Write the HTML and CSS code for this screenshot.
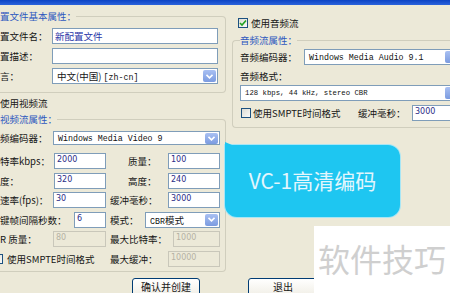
FILE: index.html
```html
<!DOCTYPE html>
<html lang="zh-CN">
<head>
    <meta charset="UTF-8">
    <title>新配置文件</title>
    <link rel="stylesheet" href="styles.css">
</head>
<body>
    <div class="titlebar"></div>

    <div class="dialog">
        <!-- left column: profile + video -->
        <div class="col-left">
            <fieldset class="group group-basic">
                <legend>置文件基本属性：</legend>
                <div class="row">
                    <span class="lab w52">置文件名：</span>
                    <span class="box w166"><span class="name-text">新配置文件</span></span>
                </div>
                <div class="row">
                    <span class="lab w52">置描述：</span>
                    <span class="box w166"></span>
                </div>
                <div class="row">
                    <span class="lab w52">言：</span>
                    <span class="box combo w166"><span class="val">中文(中国) <span class="mono">[zh-cn]</span></span><span class="drop"><svg width="7" height="5" viewBox="0 0 7 5"><path d="M0.5 0.8 L3.5 3.8 L6.5 0.8" fill="none" stroke="#fff" stroke-width="1.6"/></svg></span></span>
                </div>
            </fieldset>

            <div class="check-line video-check"><span>使用视频流</span></div>

            <fieldset class="group group-video">
                <legend>视频流属性：</legend>
                <div class="row codec-row">
                    <span class="lab w53">频编码器：</span>
                    <span class="box combo w167"><span class="val mono">Windows Media Video 9</span><span class="drop"><svg width="7" height="5" viewBox="0 0 7 5"><path d="M0.5 0.8 L3.5 3.8 L6.5 0.8" fill="none" stroke="#fff" stroke-width="1.6"/></svg></span></span>
                </div>
                <div class="row">
                    <span class="lab w54">特率kbps：</span>
                    <span class="box num w52">2000</span>
                    <span class="lab lab2-far w40">质量：</span>
                    <span class="box num w52">100</span>
                </div>
                <div class="row">
                    <span class="lab w54">度：</span>
                    <span class="box num w52">320</span>
                    <span class="lab lab2-far w40">高度：</span>
                    <span class="box num w52">240</span>
                </div>
                <div class="row">
                    <span class="lab w53">速率(fps)：</span>
                    <span class="box num w53">30</span>
                    <span class="lab lab2 w58">缓冲毫秒：</span>
                    <span class="box num w52">3000</span>
                </div>
                <div class="row">
                    <span class="lab w74">键帧间隔秒数：</span>
                    <span class="box num w32">6</span>
                    <span class="lab lab2 w35">模式：</span>
                    <span class="box combo w75"><span class="val"><span class="mono">CBR</span>模式</span><span class="drop"><svg width="7" height="5" viewBox="0 0 7 5"><path d="M0.5 0.8 L3.5 3.8 L6.5 0.8" fill="none" stroke="#fff" stroke-width="1.6"/></svg></span></span>
                </div>
                <div class="row">
                    <span class="lab w53">R 质量：</span>
                    <span class="box num off w53">80</span>
                    <span class="lab lab2 w63">最大比特率：</span>
                    <span class="box num off w47">1000</span>
                </div>
                <div class="row">
                    <span class="lab w106 smpte-left"><span class="cb"></span>使用SMPTE时间格式</span>
                    <span class="lab lab2 w58">最大缓冲：</span>
                    <span class="box num off w52">10000</span>
                </div>
            </fieldset>
        </div>

        <!-- right column: audio -->
        <div class="col-right">
            <div class="check-line audio-check">
                <span class="cb"><svg width="8" height="8" viewBox="0 0 8 8"><path d="M1 4 L3 6 L7 1.5" fill="none" stroke="#21a121" stroke-width="1.6"/></svg></span>
                <span>使用音频流</span>
            </div>

            <fieldset class="group group-audio">
                <legend>音频流属性：</legend>
                <div class="row">
                    <span class="lab w64">音频编码器：</span>
                    <span class="box combo w156"><span class="val mono">Windows Media Audio 9.1</span><span class="drop"></span></span>
                </div>
                <div class="row row-text">
                    <span class="lab">音频格式：</span>
                </div>
                <div class="row row-format">
                    <span class="box combo w220"><span class="val mono small">128 kbps, 44 kHz, stereo CBR</span><span class="drop"></span></span>
                </div>
                <div class="row row-smpte">
                    <span class="cb"></span>
                    <span class="lab w105">使用SMPTE时间格式</span>
                    <span class="lab w54">缓冲毫秒：</span>
                    <span class="box num w48">3000</span>
                </div>
            </fieldset>
        </div>
    </div>

    <div class="actions">
        <span class="btn w68">确认并创建</span>
        <span class="btn w70">退出</span>
    </div>

    <!-- annotation overlays -->
    <div class="callout">VC-1高清编码</div>
    <div class="watermark">软件技巧</div>
</body>
</html>
```

FILE: styles.css
```css
* {
    box-sizing: border-box;
}

body {
    margin: 0;
    width: 450px;
    height: 293px;
    overflow: hidden;
    position: relative;
    background-color: #ece9d8;
    font-family: "Noto Sans CJK SC", sans-serif;
    font-size: 9.5px;
    color: #151515;
}

.titlebar {
    height: 5px;
    background: linear-gradient(#0c43c4, #2b63dc);
}

.dialog {
    display: flex;
    width: 470px;
}

.col-left {
    width: 226px;
    flex: none;
}

.col-right {
    width: 244px;
    flex: none;
}

/* group boxes */
.group {
    margin: 0;
    min-width: 0;
    border: 1px solid #d0cebd;
}

.group legend {
    padding: 0;
    height: 11px;
    line-height: 11px;
    color: #2e58bf;
}

.group-basic {
    margin-top: 6px;
    border-left: none;
    border-radius: 0 4px 4px 0;
    padding: 6px 0 8px 0;
}

.group-video {
    margin-top: 5px;
    border-left: none;
    border-radius: 0 4px 4px 0;
    padding: 6px 0 4px 0;
}

.group-audio {
    margin: 7px 0 0 6px;
    border-right: none;
    border-radius: 4px 0 0 4px;
    padding: 3px 0 6px 7px;
}

/* rows */
.row {
    display: flex;
    align-items: center;
    height: 16px;
}

.group-basic .row + .row {
    margin-top: 4px;
}

.group-video .row + .row {
    margin-top: 3.5px;
}

.group-video .codec-row {
    height: 14px;
}

.group-video .codec-row + .row {
    margin-top: 8px;
}

.row-text {
    height: 12px;
    margin-top: 5px;
}

.row-format {
    margin-top: 3px;
}

.row-smpte {
    margin-top: 4px;
}

.row-smpte .cb {
    margin: 0 2px 0 1px;
}

.lab {
    flex: none;
    white-space: nowrap;
    line-height: 12px;
}

.lab2 {
    margin-left: 4px;
}

.lab2-far {
    margin-left: 22px;
}

.check-line {
    display: flex;
    align-items: center;
    height: 11px;
    line-height: 11px;
    white-space: nowrap;
}

.video-check {
    margin-top: 5px;
}

.audio-check {
    margin: 13px 0 0 12px;
    height: 10px;
}

.audio-check .cb {
    margin-right: 3px;
}

/* edit boxes */
.box {
    flex: none;
    display: flex;
    align-items: center;
    height: 16px;
    padding-left: 2px;
    border: 1px solid #7f9db9;
    background-color: #fff;
    white-space: nowrap;
    overflow: hidden;
}

.codec-row .box {
    height: 14px;
}

.num {
    font-family: "DejaVu Sans", sans-serif;
    font-size: 8px;
    color: #2c2c86;
    align-items: flex-start;
    padding-top: 1px;
}

.off {
    border-color: #c9c7ba;
    background-color: #ece9d8;
    color: #b5b2a4;
}

.name-text {
    color: #2a36a8;
    font-size: 9.5px;
}

.combo .val {
    flex: 1;
    padding-left: 2px;
    overflow: hidden;
}

.mono {
    font-family: "Liberation Mono", monospace;
    font-size: 8.3px;
    color: #111;
}

.small {
    font-size: 7.3px;
}

.drop {
    flex: none;
    display: flex;
    align-items: center;
    justify-content: center;
    width: 13px;
    height: 12px;
    margin-right: 1px;
    border-radius: 2px;
    background: linear-gradient(#a9c0f2, #7b9be0);
}

.codec-row .drop {
    height: 11px;
}

/* checkbox */
.cb {
    flex: none;
    display: flex;
    align-items: center;
    justify-content: center;
    width: 10px;
    height: 10px;
    border: 1px solid #1c5180;
    background: linear-gradient(135deg, #dcdcd4, #fafaf8);
}

.smpte-left {
    display: flex;
    align-items: center;
}

.smpte-left .cb {
    margin: 0 4px 0 -7px;
}

/* widths */
.w32 { width: 32px; }
.w35 { width: 35px; }
.w40 { width: 40px; }
.w47 { width: 47px; }
.w48 { width: 48px; }
.w52 { width: 52px; }
.w53 { width: 53px; }
.w54 { width: 54px; }
.w58 { width: 58px; }
.w63 { width: 63px; }
.w64 { width: 64px; }
.w68 { width: 68px; }
.w70 { width: 70px; }
.w74 { width: 74px; }
.w75 { width: 75px; }
.w105 { width: 105px; }
.w106 { width: 106px; }
.w156 { width: 156px; }
.w166 { width: 166px; }
.w167 { width: 167px; }
.w220 { width: 220px; }

/* buttons */
.actions {
    display: flex;
    gap: 48px;
    padding-left: 132px;
    margin-top: 6.5px;
}

.btn {
    flex: none;
    display: flex;
    justify-content: center;
    height: 22px;
    padding-top: 2px;
    border: 1px solid #003c74;
    border-radius: 3px;
    background: linear-gradient(#ffffff, #f2f0e8 75%, #dcd7ca);
    font-size: 10px;
    line-height: 11px;
}

/* overlays */
.callout {
    position: absolute;
    left: 225px;
    top: 145px;
    width: 175px;
    height: 72px;
    display: flex;
    align-items: center;
    justify-content: center;
    border-radius: 0 12px 12px 12px;
    background-color: #1ec6f1;
    box-shadow: 0 0 0 1px #a8e6f5;
    color: #e3f6fd;
    font-size: 21px;
    padding-bottom: 2px;
}

.callout::before {
    content: "";
    position: absolute;
    left: 0;
    top: -3px;
    width: 14px;
    height: 6px;
    background-color: #1ec6f1;
    clip-path: polygon(0 0, 100% 100%, 0 100%);
}

.watermark {
    position: absolute;
    left: 314px;
    top: 226px;
    width: 136px;
    height: 67px;
    display: flex;
    align-items: center;
    justify-content: center;
    background-color: #fff;
    color: #cfcfcf;
    font-size: 32px;
    padding-bottom: 4px;
}
```
